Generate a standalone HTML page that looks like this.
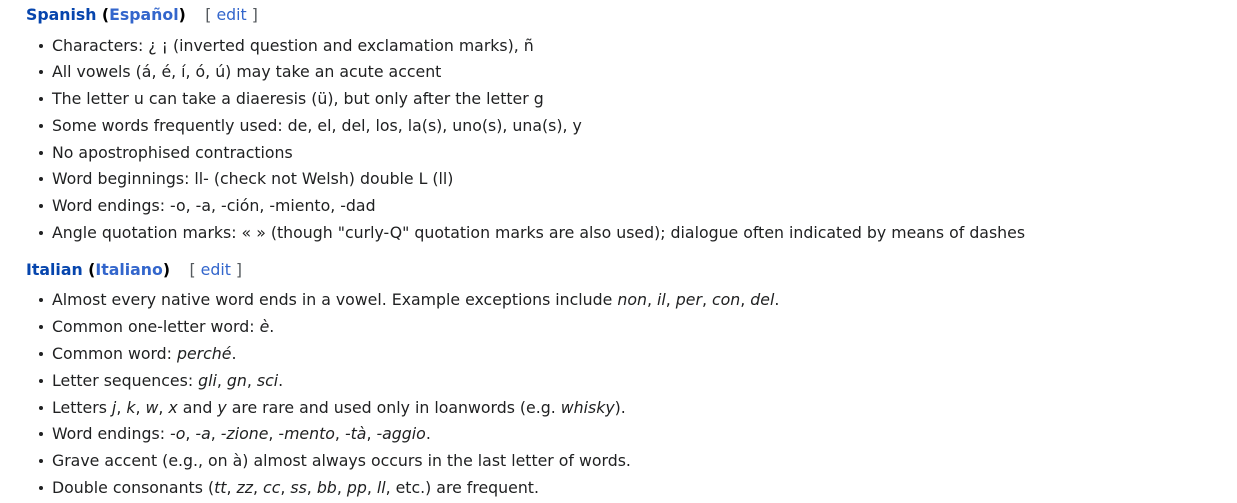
<!DOCTYPE html>
<html><head><meta charset="utf-8"><style>
body{margin:0;width:1237px;height:503px;background:#fff;font-family:"DejaVu Sans","Liberation Sans",sans-serif;font-size:15.75px;color:#202122;position:relative;overflow:hidden}
.l{position:absolute;left:52px;height:26px;line-height:26px;white-space:nowrap;margin-top:1px}
.l::before{content:"";position:absolute;left:-13px;top:11px;width:4px;height:4px;border-radius:50%;background:#202122}
.h{position:absolute;left:26px;height:26px;line-height:26px;white-space:nowrap;font-weight:bold;color:#000;margin-top:1px}
.a{color:#0645ad}.b{color:#3366cc}
.e{font-weight:normal;color:#54595d;margin-left:14px}
.e span{color:#3366cc}
</style></head><body>
<div class="h" style="top:1px"><span class="a">Spanish</span> (<span class="b">Español</span>) <span class="e">[ <span>edit</span> ]</span></div>
<div class="l" style="top:32px">Characters: ¿ ¡ (inverted question and exclamation marks), ñ</div>
<div class="l" style="top:58px">All vowels (á, é, í, ó, ú) may take an acute accent</div>
<div class="l" style="top:85px">The letter u can take a diaeresis (ü), but only after the letter g</div>
<div class="l" style="top:112px">Some words frequently used: de, el, del, los, la(s), uno(s), una(s), y</div>
<div class="l" style="top:139px">No apostrophised contractions</div>
<div class="l" style="top:165px">Word beginnings: ll- (check not Welsh) double L (ll)</div>
<div class="l" style="top:192px">Word endings: -o, -a, -ción, -miento, -dad</div>
<div class="l" style="top:219px">Angle quotation marks: « » (though "curly-Q" quotation marks are also used); dialogue often indicated by means of dashes</div>
<div class="h" style="top:256px"><span class="a">Italian</span> (<span class="b">Italiano</span>) <span class="e">[ <span>edit</span> ]</span></div>
<div class="l" style="top:286px">Almost every native word ends in a vowel. Example exceptions include <i>non</i>, <i>il</i>, <i>per</i>, <i>con</i>, <i>del</i>.</div>
<div class="l" style="top:313px">Common one-letter word: <i>è</i>.</div>
<div class="l" style="top:340px">Common word: <i>perché</i>.</div>
<div class="l" style="top:367px">Letter sequences: <i>gli</i>, <i>gn</i>, <i>sci</i>.</div>
<div class="l" style="top:394px">Letters <i>j</i>, <i>k</i>, <i>w</i>, <i>x</i> and <i>y</i> are rare and used only in loanwords (e.g. <i>whisky</i>).</div>
<div class="l" style="top:420px">Word endings: <i>-o</i>, <i>-a</i>, <i>-zione</i>, <i>-mento</i>, <i>-tà</i>, <i>-aggio</i>.</div>
<div class="l" style="top:447px">Grave accent (e.g., on à) almost always occurs in the last letter of words.</div>
<div class="l" style="top:474px">Double consonants (<i>tt</i>, <i>zz</i>, <i>cc</i>, <i>ss</i>, <i>bb</i>, <i>pp</i>, <i>ll</i>, etc.) are frequent.</div>
</body></html>
